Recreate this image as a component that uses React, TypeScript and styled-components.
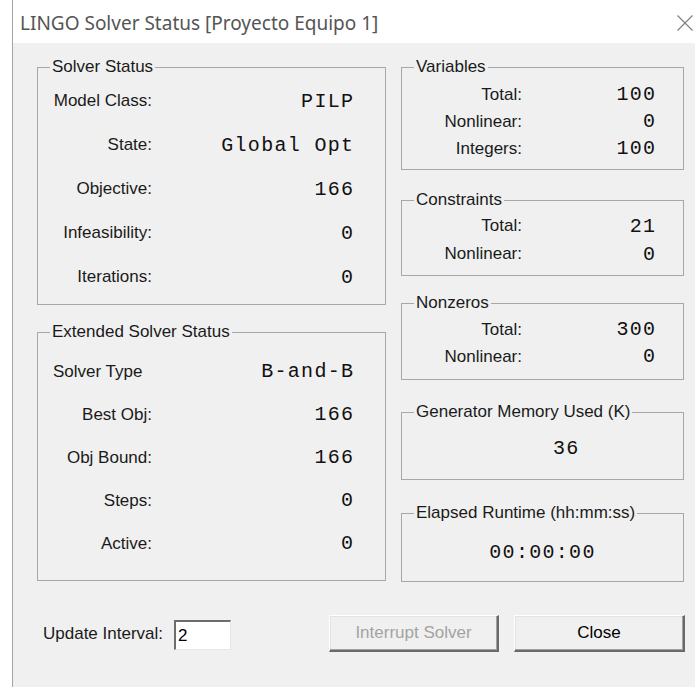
import React from "react";
import styled, { createGlobalStyle } from "styled-components";

const GlobalStyle = createGlobalStyle`
  html, body {
    margin: 0;
    background: #fff;
  }
  body {
    font-family: "Liberation Sans", Arial, sans-serif;
    color: #1a1a1a;
  }
`;

const Window = styled.div`
  margin-left: 12px;
  min-height: 687px;
  display: flex;
  flex-direction: column;
  border-left: 1px solid #a5a5a5;
`;

const TitleBar = styled.header`
  height: 43px;
  box-sizing: border-box;
  padding: 3px 2px 0 7px;
  display: flex;
  align-items: center;
  justify-content: space-between;
  background: #fff;
`;

const Title = styled.h1`
  margin: 0;
  font: 400 19px "Noto Sans", "Liberation Sans", sans-serif;
  color: #555;
`;

const CloseGlyph = styled.span`
  display: flex;
  width: 16px;
  height: 16px;
`;

const Body = styled.main`
  flex: 1;
  background: #f0f0f0;
  padding: 14px 10px 0 24px;
  display: flex;
  flex-direction: column;
`;

const Columns = styled.div`
  display: grid;
  grid-template-columns: 349px 283px;
  column-gap: 15px;
  align-items: start;
`;

const Column = styled.div`
  display: flex;
  flex-direction: column;
`;

const Group = styled.fieldset<{ $gap?: number }>`
  margin: ${(p) => p.$gap ?? 0}px 0 0;
  padding: 0;
  min-width: 0;
  border: 1px solid #a7a7a7;
`;

const Legend = styled.legend`
  margin-left: 12px;
  padding: 0 2px;
  font-size: 17px;
  line-height: 20px;
`;

const Rows = styled.div<{
  $label: number;
  $row: number;
  $lead: number;
  $trail: number;
  $top: number;
  $bottom: number;
}>`
  display: grid;
  grid-template-columns: ${(p) => p.$label}px 1fr;
  grid-auto-rows: ${(p) => p.$row}px;
  align-items: center;
  padding: ${(p) => `${p.$top}px ${p.$trail}px ${p.$bottom}px ${p.$lead}px`};
`;

const Label = styled.span<{ $align?: "left" | "right" }>`
  font-size: 17px;
  text-align: ${(p) => p.$align ?? "right"};
  white-space: nowrap;
`;

const Value = styled.span`
  font-family: "Liberation Mono", "Courier New", monospace;
  font-size: 20px;
  letter-spacing: 1.3px;
  margin-right: -1.3px;
  text-align: right;
  white-space: pre;
  color: #111;
`;

const Readout = styled.div<{
  $align: "left" | "center";
  $indent: number;
  $top: number;
  $bottom: number;
}>`
  height: 28px;
  display: flex;
  align-items: center;
  justify-content: ${(p) => (p.$align === "center" ? "center" : "flex-start")};
  margin: ${(p) => `${p.$top}px 0 ${p.$bottom}px`};
  padding-left: ${(p) => p.$indent}px;
  font-family: "Liberation Mono", "Courier New", monospace;
  font-size: 20px;
  letter-spacing: 1.3px;
  color: #111;
`;

const Footer = styled.div`
  margin-top: 33px;
  height: 37px;
  padding-left: 6px;
  display: flex;
  align-items: center;
`;

const FieldLabel = styled.label`
  font-size: 17px;
  display: flex;
  align-items: center;
  gap: 11px;
`;

const IntervalInput = styled.input`
  width: 57px;
  height: 30px;
  box-sizing: border-box;
  margin: 3px 0 0;
  padding: 0 2px;
  font: 17px "Liberation Sans", Arial, sans-serif;
  color: #000;
  background: #fff;
  border-style: solid;
  border-width: 2px 1px 1px 2px;
  border-color: #6d6d6d #e6e6e6 #e6e6e6 #6d6d6d;
  outline: none;
`;

const Buttons = styled.div`
  margin-left: auto;
  display: flex;
  gap: 15px;
`;

const Button = styled.button<{ $width: number }>`
  width: ${(p) => p.$width}px;
  height: 37px;
  box-sizing: border-box;
  background: #f0f0f0;
  font: 17px "Liberation Sans", Arial, sans-serif;
  color: #000;
  border-style: solid;
  border-width: 1px 2px 2px 1px;
  border-color: #fff #6a6a6a #6a6a6a #fff;
  box-shadow: inset -1px -1px 0 #a0a0a0, inset 1px 1px 0 #e3e3e3;
  padding: 0;

  &:disabled {
    color: #a3a3a3;
  }
`;

type Row = { label: string; value: string; align?: "left" | "right" };

const solverStatus: Row[] = [
  { label: "Model Class:", value: "PILP" },
  { label: "State:", value: "Global Opt" },
  { label: "Objective:", value: "166" },
  { label: "Infeasibility:", value: "0" },
  { label: "Iterations:", value: "0" },
];

const extendedStatus: Row[] = [
  { label: "Solver Type", value: "B-and-B", align: "left" },
  { label: "Best Obj:", value: "166" },
  { label: "Obj Bound:", value: "166" },
  { label: "Steps:", value: "0" },
  { label: "Active:", value: "0" },
];

const variables: Row[] = [
  { label: "Total:", value: "100" },
  { label: "Nonlinear:", value: "0" },
  { label: "Integers:", value: "100" },
];

const constraints: Row[] = [
  { label: "Total:", value: "21" },
  { label: "Nonlinear:", value: "0" },
];

const nonzeros: Row[] = [
  { label: "Total:", value: "300" },
  { label: "Nonlinear:", value: "0" },
];

const renderRows = (rows: Row[]) =>
  rows.map((r) => (
    <React.Fragment key={r.label}>
      <Label $align={r.align}>{r.label}</Label>
      <Value>{r.value}</Value>
    </React.Fragment>
  ));

const App = () => {
  return (
    <>
      <GlobalStyle />
      <Window>
        <TitleBar>
          <Title>LINGO Solver Status [Proyecto Equipo 1]</Title>
          <CloseGlyph>
            <svg width="16" height="16" viewBox="0 0 16 16">
              <path d="M0.5 0.5 L15.5 15.5 M15.5 0.5 L0.5 15.5" stroke="#7d7d7d" strokeWidth="1.1" fill="none" />
            </svg>
          </CloseGlyph>
        </TitleBar>
        <Body>
          <Columns>
            <Column>
              <Group>
                <Legend>Solver Status</Legend>
                <Rows $label={99} $row={44} $lead={15} $trail={32} $top={2} $bottom={5}>
                  {renderRows(solverStatus)}
                </Rows>
              </Group>
              <Group $gap={17}>
                <Legend>Extended Solver Status</Legend>
                <Rows $label={99} $row={43} $lead={15} $trail={32} $top={8} $bottom={15}>
                  {renderRows(extendedStatus)}
                </Rows>
              </Group>
            </Column>
            <Column>
              <Group>
                <Legend>Variables</Legend>
                <Rows $label={120} $row={27} $lead={0} $trail={28} $top={4} $bottom={7}>
                  {renderRows(variables)}
                </Rows>
              </Group>
              <Group $gap={20}>
                <Legend>Constraints</Legend>
                <Rows $label={120} $row={28} $lead={0} $trail={28} $top={2} $bottom={7}>
                  {renderRows(constraints)}
                </Rows>
              </Group>
              <Group $gap={17}>
                <Legend>Nonzeros</Legend>
                <Rows $label={120} $row={27} $lead={0} $trail={28} $top={3} $bottom={9}>
                  {renderRows(nonzeros)}
                </Rows>
              </Group>
              <Group $gap={22}>
                <Legend>Generator Memory Used (K)</Legend>
                <Readout $align="left" $indent={151} $top={12} $bottom={17}>
                  36
                </Readout>
              </Group>
              <Group $gap={23}>
                <Legend>Elapsed Runtime (hh:mm:ss)</Legend>
                <Readout $align="center" $indent={0} $top={15} $bottom={15}>
                  00:00:00
                </Readout>
              </Group>
            </Column>
          </Columns>
          <Footer>
            <FieldLabel>
              Update Interval:
              <IntervalInput defaultValue="2" />
            </FieldLabel>
            <Buttons>
              <Button $width={170} disabled>
                Interrupt Solver
              </Button>
              <Button $width={171}>Close</Button>
            </Buttons>
          </Footer>
        </Body>
      </Window>
    </>
  );
};

export default App;
